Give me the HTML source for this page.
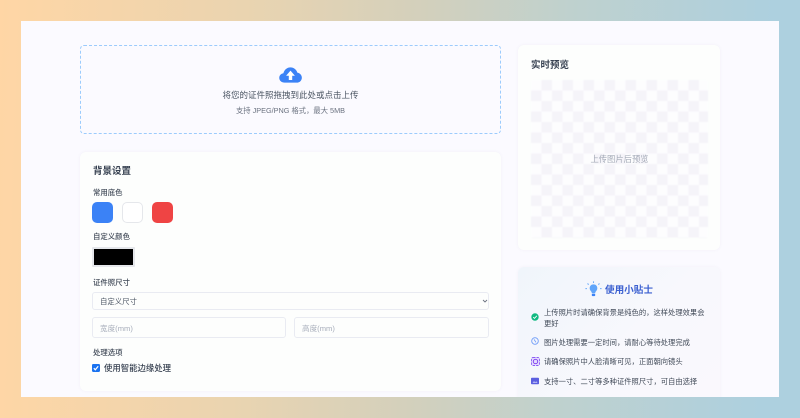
<!DOCTYPE html>
<html lang="zh-CN">
<head>
<meta charset="utf-8">
<title>证件照</title>
<style>
html,body{margin:0;padding:0;width:800px;height:418px;overflow:hidden}
body{position:relative;background:linear-gradient(92deg,#ffd6a5 0%,#ead4b0 30%,#d3d0bc 52%,#bfd1ce 70%,#add0df 95%);font-family:"Liberation Sans","Noto Sans CJK SC",sans-serif;color:#374151}
.a{position:absolute}
.t{position:absolute;white-space:nowrap;filter:blur(.3px)}
#panel{left:21px;top:21px;width:758px;height:376px;background:#fbfaff;overflow:hidden}
.card{position:absolute;background:#fdfefd;border-radius:6px;box-shadow:0 0 3px rgba(120,120,160,.07)}
.field{position:absolute;box-sizing:border-box;background:#fdfefd;border:1px solid #e9ebf2;border-radius:3px}
.label{font-size:7.4px;line-height:10px;color:#414a58;font-weight:500}
.tip{font-size:7.3px;line-height:11px;color:#414a58}
</style>
</head>
<body>
<div class="a" id="panel">
  <div class="a" style="left:59px;top:24px;width:421px;height:89px;box-sizing:border-box;border:1px dashed #9ccbfc;border-radius:4px"></div>
  <svg class="a" style="left:257px;top:45px" width="25" height="18" viewBox="0 0 27 20">
    <path d="M7 18.500C3.600 18.500 1 16.200 1 13.200 1 10.500 3 8.500 5.600 8.100 6.600 4.200 9.600 1.500 13.500 1.500c3.600 0 6.600 2.400 7.600 5.800 2.900.4 5 2.800 5 5.700 0 3-2.400 5.500-5.600 5.500z" fill="#3b82f6"/>
    <path d="M13.500 5.200 18.400 10.800H15.400V15.600H11.600V10.800H8.600z" fill="#fff"/>
  </svg>
  <div class="t" style="left:59px;width:421px;text-align:center;top:68px;font-size:8.500px;line-height:13px;color:#4b5563">将您的证件照拖拽到此处或点击上传</div>
  <div class="t" style="left:59px;width:421px;text-align:center;top:85px;font-size:7.300px;line-height:10px;color:#6b7280">支持 JPEG/PNG 格式，最大 5MB</div>

  <div class="card" style="left:59px;top:131px;width:421px;height:239px"></div>
  <div class="t" style="left:72px;top:144px;font-size:9.500px;line-height:14px;font-weight:700;color:#374151">背景设置</div>
  <div class="t label" style="left:72px;top:167px">常用底色</div>
  <div class="a" style="left:71px;top:181px;width:21px;height:21px;background:#3b82f6;border-radius:5px"></div>
  <div class="a" style="left:101px;top:181px;width:21px;height:21px;box-sizing:border-box;background:#fff;border:1px solid #e5e7eb;border-radius:5px"></div>
  <div class="a" style="left:131px;top:181px;width:21px;height:21px;background:#ef4444;border-radius:5px"></div>
  <div class="t label" style="left:72px;top:211px">自定义颜色</div>
  <div class="a" style="left:71px;top:226px;width:43px;height:20px;box-sizing:border-box;background:#000;border:2px solid #e5e7eb;border-radius:1px"></div>
  <div class="t label" style="left:72px;top:257px">证件照尺寸</div>
  <div class="field" style="left:71px;top:271px;width:397px;height:18px"></div>
  <div class="t" style="left:79px;top:276px;font-size:7.400px;line-height:10px;color:#4b5563">自定义尺寸</div>
  <svg class="a" style="left:461px;top:277px" width="6" height="6" viewBox="0 0 6 6"><path d="M1 2 3 4 5 2" fill="none" stroke="#6b7280" stroke-width=".9"/></svg>
  <div class="field" style="left:71px;top:296px;width:194px;height:21px"></div>
  <div class="t" style="left:79px;top:303px;font-size:7.600px;line-height:10px;color:#a8aebb">宽度(mm)</div>
  <div class="field" style="left:273px;top:296px;width:195px;height:21px"></div>
  <div class="t" style="left:281px;top:303px;font-size:7.600px;line-height:10px;color:#a8aebb">高度(mm)</div>
  <div class="t label" style="left:72px;top:327px">处理选项</div>
  <svg class="a" style="left:71px;top:343px" width="8" height="8" viewBox="0 0 8 8"><rect width="8" height="8" rx="1.200" fill="#1a73f0"/><path d="M1.800 4.200 3.300 5.800 6.200 2.300" fill="none" stroke="#fff" stroke-width="1.200"/></svg>
  <div class="t" style="left:83px;top:341px;font-size:8.400px;line-height:13px;font-weight:500;color:#374151">使用智能边缘处理</div>

  <div class="card" style="left:497px;top:24px;width:202px;height:205px"></div>
  <div class="t" style="left:510px;top:38px;font-size:9.500px;line-height:14px;font-weight:700;color:#374151">实时预览</div>
  <div class="a" style="left:510px;top:59px;width:177px;height:158px;filter:blur(.5px);background-color:#fdfdfe;background-image:linear-gradient(45deg,#f5f4f9 25%,transparent 25%,transparent 75%,#f5f4f9 75%),linear-gradient(45deg,#f5f4f9 25%,transparent 25%,transparent 75%,#f5f4f9 75%);background-size:21px 21px;background-position:0 0,10.500px 10.500px;border-radius:2px"></div>
  <div class="t" style="left:510px;width:177px;text-align:center;top:132px;font-size:8.300px;line-height:13px;color:#a5abb8">上传图片后预览</div>

  <div class="card" style="left:497px;top:246px;width:202px;height:140px;background:linear-gradient(135deg,#f0f5fb,#f8f8fd 55%,#faf8fd)"></div>
  <svg class="a" style="left:564px;top:260px" width="17" height="17" viewBox="0 0 16 16">
    <path d="M8 3.200C5.800 3.200 4.400 4.800 4.400 6.800c0 1.500.9 2.400 1.600 3.300.3.400.4.900.4 1.400h3.200c0-.5.100-1 .4-1.400.7-.9 1.600-1.800 1.600-3.300 0-2-1.400-3.600-3.600-3.600z" fill="#60a5fa"/>
    <rect x="6.400" y="12" width="3.200" height="2.200" rx=".8" fill="#3b82f6"/>
    <path d="M8 .4V1.800M2.400 2.400 3.400 3.400M13.600 2.400 12.600 3.400M.4 7.200H1.800M14.200 7.200H15.600" stroke="#60a5fa" stroke-width="1"/>
  </svg>
  <div class="t" style="left:584px;top:263px;font-size:9.600px;line-height:14px;font-weight:700;color:#3a5fd0">使用小贴士</div>

  <svg class="a" style="left:510px;top:292px" width="8" height="8" viewBox="0 0 8 8"><circle cx="4" cy="4" r="3.700" fill="#10b981"/><path d="M2.200 4.100 3.500 5.400 5.800 2.800" fill="none" stroke="#fff" stroke-width=".9"/></svg>
  <div class="t tip" style="left:523px;top:286px">上传照片时请确保背景是纯色的，这样处理效果会</div>
  <div class="t tip" style="left:523px;top:297px">更好</div>

  <svg class="a" style="left:510px;top:316px" width="8" height="8" viewBox="0 0 8 8"><circle cx="4" cy="4" r="3.300" fill="none" stroke="#6f9cf8" stroke-width=".9"/><path d="M3 2.400 5 5.400" stroke="#6f9cf8" stroke-width=".8"/></svg>
  <div class="t tip" style="left:523px;top:316px">图片处理需要一定时间，请耐心等待处理完成</div>

  <svg class="a" style="left:510px;top:336px" width="9" height="9" viewBox="0 0 9 9"><rect x=".5" y=".5" width="8" height="8" rx="1.500" fill="#e4dcfd" stroke="#8b5cf6" stroke-width=".9" stroke-dasharray="2.500 1"/><circle cx="4.500" cy="4.500" r="2.200" fill="none" stroke="#7c3aed" stroke-width=".9"/></svg>
  <div class="t tip" style="left:523px;top:335px">请确保照片中人脸清晰可见，正面朝向镜头</div>

  <svg class="a" style="left:510px;top:356px" width="8" height="8" viewBox="0 0 8 8"><rect y=".8" width="8" height="6.400" rx=".8" fill="#5b5fe0"/><path d="M1.500 5.800 3 4.200 4.200 5.200 5.200 4.400 6.600 5.800z" fill="#cfd2fa"/></svg>
  <div class="t tip" style="left:523px;top:355px">支持一寸、二寸等多种证件照尺寸，可自由选择</div>
</div>
</body>
</html>
